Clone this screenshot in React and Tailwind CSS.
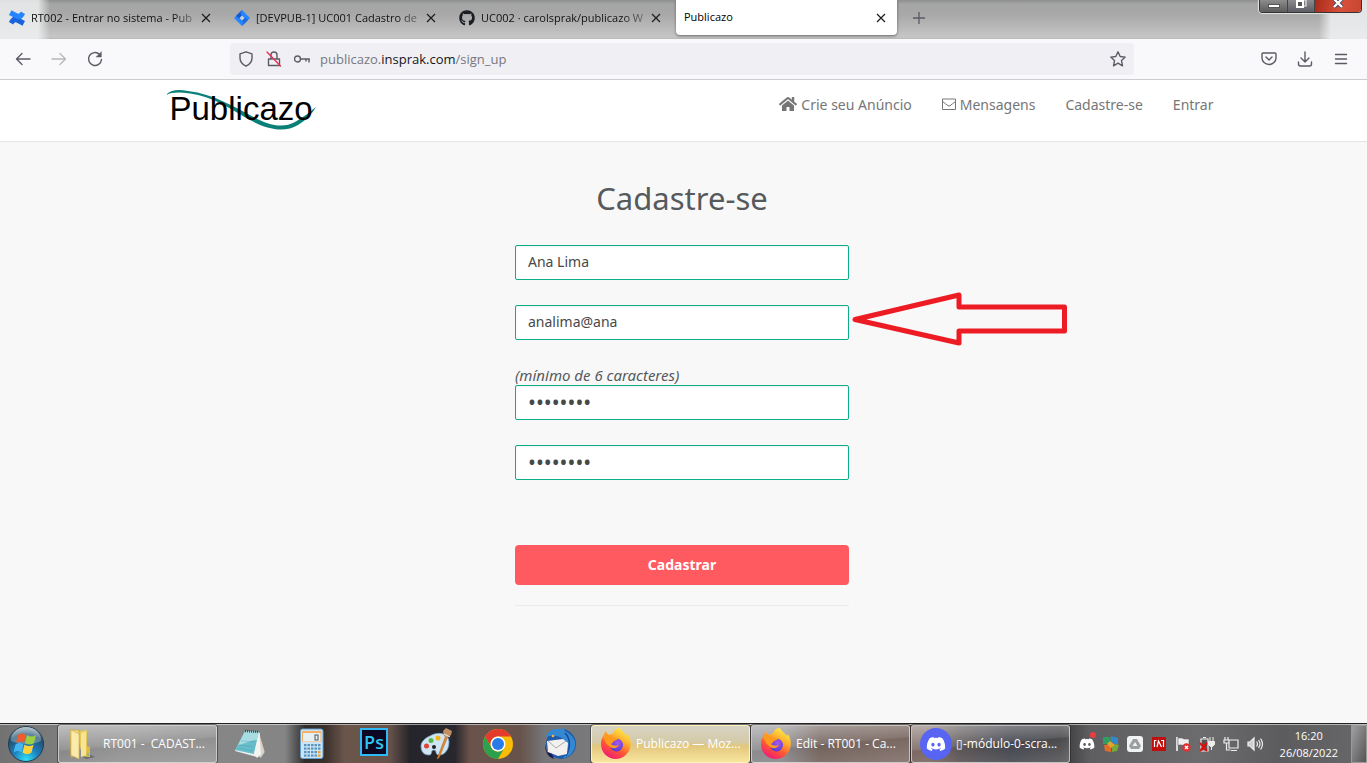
import { FaGithub, FaDiscord, FaHome } from "react-icons/fa";

const UI_FONT = "font-['Open_Sans','Noto_Sans',sans-serif]";

function ConfluenceIcon() {
  return (
    <svg viewBox="0 0 32 32" className="size-4 shrink-0" aria-hidden="true">
      <path d="M0 24c1-2 5-9 9-10.500c5-1.500 10 2 23 8.500l-5 9.500c-8-4-12-7-14-7c-2 0-3 2-4.500 4.500z" fill="#1a63dc" />
      <path d="M32 8c-1 2-5 9-9 10.500c-5 1.500-10-2-23-8.500l5-9.500c8 4 12 7 14 7c2 0 3-2 4.500-4.500z" fill="#2684ff" />
    </svg>
  );
}

function JiraIcon() {
  return (
    <svg viewBox="0 0 32 32" className="size-4 shrink-0" aria-hidden="true">
      <path d="M16 0l16 16l-16 16l-16-16z" fill="#2684ff" />
      <path d="M16 0c-4 5-3 9 0 11l-6 6l-6-5z" fill="#1458cc" />
      <path d="M16 32c4-5 3-9 0-11l6-6l6 5z" fill="#1d69e0" />
      <path d="M16 11l5 5l-5 5l-5-5z" fill="#c9d2e0" />
    </svg>
  );
}

function CloseGlyph() {
  return (
    <svg viewBox="0 0 16 16" className="size-4" fill="none" stroke="#1c1c22" strokeWidth="1.200" aria-hidden="true">
      <path d="M4 4l8 8M12 4l-8 8" />
    </svg>
  );
}

function Tab({ icon, title }) {
  return (
    <div className="flex h-9 w-[225px] min-w-0 items-center pr-[11px] pl-[9px]">
      {icon}
      <span className="ml-1.5 min-w-0 flex-1 text-[11px] whitespace-nowrap text-[#111] [mask-image:linear-gradient(to_right,#000_84%,#0004)]">
        {title}
      </span>
      <button type="button" aria-label="Fechar aba"><CloseGlyph /></button>
    </div>
  );
}

function TabStrip() {
  return (
    <div className="flex h-[39px] items-start overflow-hidden bg-[linear-gradient(to_right,#f2f4f5cc_0px,#f2f4f5cc_38px,transparent_50px,transparent_calc(100%-48px),#f2f4f5cc_calc(100%-36px)),linear-gradient(#8e8f8f_0px,#a4a5a4_4px,#a7a8a7_14px,#b6b7b6_26px,#c6c6c6_37px,#b8b8b8_39px)]">
      <Tab icon={<ConfluenceIcon />} title="RT002 - Entrar no sistema - Pub" />
      <Tab icon={<JiraIcon />} title="[DEVPUB-1] UC001 Cadastro de" />
      <Tab icon={<FaGithub className="size-4 shrink-0 text-[#1b1f23]" />} title="UC002 · carolsprak/publicazo W" />
      <div className="mr-3.5 ml-px flex h-[35px] w-[221px] items-center justify-between rounded-b bg-white pr-2 pl-2 shadow-[0_1px_3px_#0007]">
        <span className="text-[11px] text-black">Publicazo</span>
        <button type="button" aria-label="Fechar aba"><CloseGlyph /></button>
      </div>
      <button type="button" aria-label="Nova aba" className="flex h-9 items-center">
        <svg viewBox="0 0 16 16" className="size-4" stroke="#5b5b66" strokeWidth="1.300" aria-hidden="true"><path d="M8 2v12M2 8h12" /></svg>
      </button>
      <div className="mr-[5px] ml-auto flex h-[13px] overflow-hidden rounded-b-sm border border-t-0 border-[#333] shadow-[0_0_1px_1px_#e6e6e6]">
        <button type="button" aria-label="Minimizar" className="flex w-7 justify-center border-r border-[#444] bg-linear-to-b from-[#8d8d8d] to-[#5c5c5e] pt-1">
          <span className="h-1 w-3 border border-[#555] bg-white" />
        </button>
        <button type="button" aria-label="Restaurar" className="flex w-[27px] justify-center border-r border-[#444] bg-linear-to-b from-[#8d8d8d] to-[#5c5c66]">
          <svg viewBox="0 0 12 12" className="size-3" aria-hidden="true">
            <path d="M4 0h7v6h-2" fill="none" stroke="#e8e8e8" strokeWidth="1.200" />
            <path d="M2 1h6v6h-6z" fill="#555" stroke="#fff" strokeWidth="2" />
          </svg>
        </button>
        <button type="button" aria-label="Fechar janela" className="flex w-[46px] justify-center bg-[linear-gradient(100deg,#a82a1a,#d9503a_55%,#c84630)]">
          <svg viewBox="0 0 12 10" className="h-2.5 w-3" aria-hidden="true">
            <path d="M2 -1l8 8M10 -1l-8 8" stroke="#44445a" strokeWidth="4" />
            <path d="M2 -1l8 8M10 -1l-8 8" stroke="#fff" strokeWidth="2.400" />
          </svg>
        </button>
      </div>
    </div>
  );
}

const stroke = { fill: "none", stroke: "#5b5b66", strokeWidth: 1.4, strokeLinecap: "round", strokeLinejoin: "round" };

function Line({ children, ...rest }) {
  return <svg viewBox="0 0 16 16" className="size-4" {...stroke} {...rest} aria-hidden="true">{children}</svg>;
}

function Toolbar() {
  return (
    <div className="flex h-[41px] items-center border-b border-[#ccccd1] bg-[#f9f9fb] pr-[18px] pl-[15px]">
      <div className="flex flex-1 gap-5">
        <button type="button" aria-label="Voltar"><Line><path d="M15 8h-13.500M7 2.500l-5.500 5.500l5.500 5.500" /></Line></button>
        <button type="button" aria-label="Avançar"><Line stroke="#b8b8bd"><path d="M1 8h13.500M9 2.500l5.500 5.500l-5.500 5.500" /></Line></button>
        <button type="button" aria-label="Recarregar"><Line><path d="M14.500 8.500a6.500 6.500 0 1 1-2-5.200" /><path d="M14.300 1v5h-5z" fill="#5b5b66" strokeWidth="0.500" /></Line></button>
      </div>
      <div className="flex h-8 w-[904px] items-center rounded bg-[#f0f0f4] px-2">
        <Line><path d="M8 .8l6 2v4.200c0 4-2.500 6.500-6 8.200c-3.500-1.700-6-4.200-6-8.200v-4.200z" /></Line>
        <span className="ml-3">
          <Line><path d="M2.500 8h11v6.500h-11zM5 8v-4a3 3 0 0 1 6 0v4" /><path d="M1 1l13.500 14" stroke="#ef2f55" /></Line>
        </span>
        <span className="ml-3">
          <Line><circle cx="3.500" cy="8" r="3" /><path d="M6.500 8h9M15 8v3M12 8v2" /></Line>
        </span>
        <div className="ml-2.5 flex-1 pt-0.5 text-[13px] text-[#77777f]">publicazo.<span className="text-[#15141a]">insprak.com</span>/sign_up</div>
        <button type="button" aria-label="Adicionar aos favoritos"><Line><path d="M8 .8l2.200 4.700l5 .6l-3.700 3.500l1 5.200l-4.500-2.600l-4.500 2.600l1-5.200l-3.700-3.500l5-.6z" /></Line></button>
      </div>
      <div className="flex flex-1 justify-end gap-5">
        <button type="button" aria-label="Pocket"><Line><path d="M2 2h12a1 1 0 0 1 1 1v4a7 6.500 0 0 1-14 0v-4a1 1 0 0 1 1-1zM5 6l3 3l3-3" /></Line></button>
        <button type="button" aria-label="Downloads"><Line><path d="M8 1v10M4 7l4 4l4-4M1.500 11v2a2 2 0 0 0 2 2h9a2 2 0 0 0 2-2v-2" /></Line></button>
        <button type="button" aria-label="Menu"><Line><path d="M2.500 3.500h11M2.500 8h11M2.500 12.500h11" /></Line></button>
      </div>
    </div>
  );
}

function Logo() {
  return (
    <a href="#inicio" className="relative block h-[50px] w-[150px]">
      <svg viewBox="0 0 150 50" className="absolute inset-0 h-full w-full" fill="#0b8079" aria-hidden="true">
        <path d="M0 11C4 6 12 5 22 7C48 10 68 23 84 31C98 39 115 46 129 38C138 33 145 27 150 23C146 30 139 37 132 41C117 50 98 44 82 35C65 25 46 12 24 9.500C14 8 6 8 0 11z" />
      </svg>
      <span className="relative block pl-1 text-[33px] leading-[50px] text-black font-['Liberation_Sans',sans-serif]">Publicazo</span>
    </a>
  );
}

function SiteHeader() {
  return (
    <header className="border-b border-[#e4e4e4] bg-white">
      <div className="mx-auto flex h-[61px] max-w-[1064px] justify-between pt-1 pr-0.5 pl-3.5">
        <Logo />
        <nav className="flex h-10 items-center gap-[30px] text-[14px] text-[#767676]">
          <a href="#anuncio" className="flex items-center gap-1"><FaHome className="size-[18px]" />Crie seu Anúncio</a>
          <a href="#mensagens" className="flex items-center gap-1">
            <svg viewBox="0 0 14 14" className="size-3.5" fill="none" stroke="#767676" strokeLinejoin="round" aria-hidden="true">
              <path d="M.5 2h13v10.500h-13zM.5 4.500c2 1.500 4 3 5.500 4.200q1 .8 2 0c1.500-1.200 3.500-2.700 5.500-4.200" />
            </svg>
            Mensagens
          </a>
          <a href="#cadastro">Cadastre-se</a>
          <a href="#entrar">Entrar</a>
        </nav>
      </div>
    </header>
  );
}

const FIELD = "block h-[35px] w-full rounded-[2px] border border-[#0cae8a] bg-white px-3 pb-0.5 text-[#484848] shadow-[inset_0_1px_2px_#0001] outline-none";

function SignUp() {
  return (
    <main id="cadastro" className="flex flex-1 flex-col items-center bg-[#f8f8f8] pt-9 pr-[3px] text-[#565a5c]">
      <h1 className="text-[31px] leading-10">Cadastre-se</h1>
      <form className="mt-[27px] w-[334px] text-[14px]" onSubmit={(e) => e.preventDefault()}>
        <input aria-label="Nome" defaultValue="Ana Lima" className={FIELD} />
        <div className="relative mt-[25px]">
          <input aria-label="E-mail" defaultValue="analima@ana" className={FIELD} />
          <svg viewBox="0 0 218 56" className="absolute top-[-14px] left-[336px] h-14 w-[218px]" fill="none" stroke="#ed1c24" strokeWidth="5" strokeLinejoin="round" aria-hidden="true">
            <path d="M4 28.500L108 4v12h105.500v24H108v12z" />
          </svg>
        </div>
        <label htmlFor="senha" className="mt-[25px] block text-[15px] leading-5 italic">(mínimo de 6 caracteres)</label>
        <input id="senha" type="password" defaultValue="abcdefgh" className={`text-[21px] ${FIELD}`} />
        <input aria-label="Confirmar senha" type="password" defaultValue="abcdefgh" className={`mt-[25px] text-[21px] ${FIELD}`} />
        <button type="submit" className="mt-[65px] h-10 w-full rounded bg-[#ff5a5f] pb-0.5 font-bold text-white">Cadastrar</button>
        <hr className="mt-5 border-[#ececec]" />
      </form>
    </main>
  );
}

function FirefoxIcon() {
  return (
    <svg viewBox="0 0 32 32" className="size-8 shrink-0" aria-hidden="true">
      <defs>
        <linearGradient id="ffa" x1="0.800" y1="0" x2="0.250" y2="1">
          <stop offset="0" stopColor="#fff44f" /><stop offset="0.350" stopColor="#ffb02e" /><stop offset="0.650" stopColor="#ff5634" /><stop offset="1" stopColor="#f0147c" />
        </linearGradient>
        <radialGradient id="ffb" cx="0.600" cy="0.350" r="0.700"><stop offset="0" stopColor="#a857f2" /><stop offset="1" stopColor="#4a3ccf" /></radialGradient>
      </defs>
      <path d="M20 0c1 3 5 5 7 8l1-2c3 5 4 11 1 17c-3 5-8 8-13 8c-9 0-15-7-15-15c0-4 1-6 3-9l1-4l4 4l4-2c2-4 4-5 7-5z" fill="url(#ffa)" />
      <circle cx="16.500" cy="17" r="6.500" fill="url(#ffb)" />
      <path d="M3 8c4-2 7-1 10 1l5 1c0 2-2 2-4 3c-1 1-1 2-3 3c2 2 5 2 8 1c-2 4-7 4-10 1c-3-2-5-6-6-10z" fill="#ff9a20" />
    </svg>
  );
}

function StartOrb() {
  return (
    <svg viewBox="0 0 38 38" className="size-[38px]" aria-hidden="true">
      <defs><radialGradient id="orb" cx="0.500" cy="0.950" r="0.950"><stop offset="0" stopColor="#2fe0f8" /><stop offset="0.400" stopColor="#1d7dbd" /><stop offset="0.750" stopColor="#24506f" /><stop offset="1" stopColor="#a6bcc6" /></radialGradient></defs>
      <circle cx="19" cy="19" r="17.500" fill="url(#orb)" stroke="#243c4c" />
      <path d="M4 16a15 14 0 0 1 30 0c-8 4-20 4-30 0z" fill="#fff" opacity="0.280" />
      <path d="M11 10c3-2 5-2 8 0l-2 8c-3-2-5-2-8 0z" fill="#ef5b2b" />
      <path d="M20 10c3 2 6 2 9 0l-2 8c-3 2-6 2-9 0z" fill="#9bd042" />
      <path d="M8.500 19.500c3-2 5-2 8 0l-2 8c-3-2-5-2-8 0z" fill="#43b5ef" />
      <path d="M17.500 19.500c3 2 6 2 9 0l-2 8c-3 2-6 2-9 0z" fill="#fcd13b" />
    </svg>
  );
}

function FolderIcon() {
  return (
    <svg viewBox="0 0 32 32" className="size-8 shrink-0" aria-hidden="true">
      <path d="M16 29l8-2l4 2l-9 2z" fill="#0004" />
      <path d="M10 3l10-1v22l3 1v4l-8-1z" fill="#e5c85a" />
      <path d="M3 2h9v26l-8 1z" fill="#f0d983" stroke="#c9a53d" strokeWidth="0.700" />
      <path d="M4 2l8 4v25l-8-4z" fill="#fbebaa" stroke="#cfae4b" strokeWidth="0.600" />
      <path d="M14 5l5-2v24l-5 2z" fill="#f8e496" />
      <path d="M20 18l3 1v9l-4 1z" fill="#e0b943" /><path d="M21 25v3" stroke="#45b0e0" />
    </svg>
  );
}

function NotepadIcon() {
  return (
    <svg viewBox="0 0 32 32" className="size-8" aria-hidden="true">
      <path d="M25 4l6 20l-4 6l-5-3z" fill="#d8d5c8" stroke="#807f78" strokeWidth="0.500" />
      <path d="M11 4l15 1l-3 24l-22-6z" fill="#e8eff0" />
      <path d="M11 3l14 1l-5 22l-19-4z" fill="#68bdca" />
      <path d="M11 3l14 1l-2 8c-6 0-11 4-19 5z" fill="#a7dce2" />
      <path d="M20 26l5-22l2 22l-4 4z" fill="#f4f4f1" />
      <path d="M11 3l14 1" stroke="#454d50" strokeWidth="2.500" strokeDasharray="1 1" />
      <path d="M7 13l14 1M5 17l15 2M4 20l15 3" stroke="#4497a9" strokeWidth="0.600" opacity="0.600" />
    </svg>
  );
}

const CALC_KEYS = [4, 7.5, 11, 14.5, 18].flatMap((x) => [16, 19.5, 23, 26.5].map((y) => [x, y]));

function CalculatorIcon() {
  return (
    <svg viewBox="0 0 24 32" className="h-8 w-6" aria-hidden="true">
      <rect x="0.500" y="1" width="22.500" height="29.500" rx="2" fill="#c9e4f7" stroke="#669dc6" />
      <rect x="2" y="3" width="19.500" height="11" rx="1" fill="#f5b066" />
      <rect x="3" y="5" width="17.500" height="8.500" fill="#e8eff2" />
      <rect x="15" y="7" width="3" height="5" fill="none" stroke="#4b5963" />
      {CALC_KEYS.map(([x, y]) => <rect key={`${x}-${y}`} x={x} y={y} width="2.500" height="2.200" fill={x === 18 && y > 22 ? "#f3a02d" : "#5d94bd"} />)}
    </svg>
  );
}

function PhotoshopIcon() {
  return <span className="flex size-7 items-center justify-center border-2 border-[#2fb9f5] bg-[#0c0824] text-[18px] leading-none font-semibold text-[#31c5f0]">Ps</span>;
}

function PaintIcon() {
  return (
    <svg viewBox="0 0 32 32" className="size-8" aria-hidden="true">
      <path d="M10 8c8-5 19-3 19 6c0 8-5 14-11 13c-3-1-1-5-4-5c-4 0-1 5-5 5c-5 0-8-3-8-9c0-4 4-8 9-10z" fill="#cfe5f4" stroke="#75a5c6" strokeWidth="0.800" />
      <circle cx="6.500" cy="18" r="2.500" fill="#e34335" /><circle cx="11" cy="12.500" r="2.500" fill="#54b748" /><circle cx="18" cy="10" r="2.500" fill="#f2b31c" /><circle cx="14" cy="19" r="2" fill="#222" />
      <path d="M26 7l2 1l-9 22l-2 1z" fill="#e58b2d" stroke="#a45d17" strokeWidth="0.500" />
      <path d="M23 3l3-3l6 3l-1 4l-4 3l-3-2z" fill="#c09062" /><path d="M24 6l6 3" stroke="#eee" />
    </svg>
  );
}

function ChromeIcon() {
  return (
    <svg viewBox="0 0 32 32" className="size-8" aria-hidden="true">
      <circle cx="16" cy="16" r="15" fill="#fbbc05" />
      <path d="M3 8.500A15 15 0 0 1 29 8.500H16a7.500 7.500 0 0 0-6.500 11.200z" fill="#e33b2e" />
      <path d="M3 8.500a15 15 0 0 0 13 22.500l6.500-11.300a7.500 7.500 0 0 1-13 0z" fill="#2da04d" />
      <circle cx="16" cy="16" r="7.500" fill="#fff" /><circle cx="16" cy="16" r="6" fill="#287ce8" />
    </svg>
  );
}

function ThunderbirdIcon() {
  return (
    <svg viewBox="0 0 32 32" className="size-8" aria-hidden="true">
      <circle cx="17" cy="16" r="15" fill="#1e5baa" />
      <path d="M2 9c1-6 8-9 15-8l4-1c-2 2 0 3 2 4c6 4 9 9 8 14c-1 7-7 12-12 12c5-5 7-13 0-19c-4-4-12-4-17-2z" fill="#3589d3" />
      <path d="M21 5c6 6 5 15 1 23" stroke="#174b92" strokeWidth="1.500" fill="none" />
      <path d="M3 13l16-2l5 4l-1 11l-9 2l-10-4z" fill="#f3f1ef" />
      <path d="M4 13l8 7l10-7" fill="none" stroke="#a9a9ac" />
      <path d="M1 16c0 8 3 13 9 15l-2-5l-5-2z" fill="#201850" />
      <circle cx="9" cy="8" r="1.300" fill="#f8b62d" />
    </svg>
  );
}

function DiscordIcon() {
  return <span className="flex size-8 shrink-0 items-center justify-center rounded-full bg-[#5865f2]"><FaDiscord className="size-5 text-white" /></span>;
}

const PINNED = [
  ["Bloco de notas", NotepadIcon], ["Calculadora", CalculatorIcon], ["Photoshop", PhotoshopIcon],
  ["Paint", PaintIcon], ["Chrome", ChromeIcon], ["Thunderbird", ThunderbirdIcon],
];

function TaskButton({ icon, label, tone }) {
  return (
    <button type="button" className={`flex h-[38px] w-[159px] items-center gap-1 rounded-[3px] border px-2 text-[12px] text-white ${tone}`}>
      {icon}
      <span className="whitespace-pre">{label}</span>
    </button>
  );
}

const GLASS = "border-[#ddddddbb] bg-[linear-gradient(175deg,#ffffff80_0%,#ffffff30_48%,#ffffff18_52%,#ffffff38_100%)] shadow-[0_0_0_1px_#2228]";
const ACTIVE = "border-[#fff2bc] bg-[linear-gradient(#d7d3c5_0%,#d5cba8_45%,#e2c77c_55%,#f8e59e_100%)] shadow-[0_0_0_1px_#3339]";

function TrayIcons() {
  return (
    <div className="flex items-center gap-2">
      <span className="relative">
        <FaDiscord className="size-4 text-white" />
        <span className="absolute -top-1 -right-px size-1.5 rounded-full bg-[#f03b3e]" />
      </span>
      <svg viewBox="0 0 16 16" className="size-4" aria-hidden="true"><path d="M0 1h7l1 5l-3 2h-5z" fill="#2f9e62" /><path d="M8 0l7 2v6h-4l-3-3z" fill="#3188cf" /><path d="M1 9h5l2 2v5l-6-1z" fill="#e26c2e" /><path d="M9 10l4-2l3 1l-2 6l-5 1z" fill="#76a83a" /><path d="M4 8l3-3l5 4l-4 3z" fill="#e0a52c" /></svg>
      <svg viewBox="0 0 16 16" className="size-4" aria-hidden="true"><rect width="16" height="16" rx="3" fill="#f2f2f2" /><path d="M6 3h4l4 7l-2 3h-8l-2-3z" fill="#9aa0a5" /><path d="M8 6l2.500 4h-5z" fill="#f2f2f2" /></svg>
      <svg viewBox="0 0 16 16" className="size-4" aria-hidden="true"><path d="M1 1h14v14h-14z" fill="#c20d0d" /><path d="M3.500 4v7M3.500 4.500h2M6 11l1.500-6l3 6M12.500 4v7M12.500 4.500h-2.500" fill="none" stroke="#fff" strokeWidth="1.200" /></svg>
      <svg viewBox="0 0 16 16" className="size-4" aria-hidden="true"><path d="M2 1v14" stroke="#fff" strokeWidth="1.500" /><path d="M3 2h4l2 1h5v7h-5l-2-1h-4z" fill="#eee" stroke="#555" strokeWidth="0.500" /><circle cx="11.500" cy="11.500" r="4.200" fill="#df3032" /><path d="M10 10l3 3M13 10l-3 3" stroke="#fff" strokeWidth="1.400" /></svg>
      <svg viewBox="0 0 16 16" className="size-4" aria-hidden="true"><path d="M2 3h7v12h-7zM4 1.500h3" fill="#555" stroke="#eee" strokeWidth="1.200" /><path d="M11 1v4M14 1v4M9.500 5.500h6v3l-2 2h-2l-2-2zM12.500 10v4" fill="#eee" stroke="#eee" /><path d="M1 7l7 8M8 7l-7 8" stroke="#e30c0c" strokeWidth="2" /></svg>
      <svg viewBox="0 0 16 16" className="size-4" fill="none" stroke="#eee" strokeWidth="1.200" aria-hidden="true"><path d="M6 4h9v8h-9zM8 14.500h6M2 1v3M5 1v3M1 4h5v3h-5zM3.500 7v7h4" /></svg>
      <svg viewBox="0 0 16 16" className="size-4" fill="none" stroke="#eee" strokeWidth="1.200" aria-hidden="true"><path d="M1 6h2l4-4v12l-4-4h-2z" fill="#ccc" /><path d="M9.500 5.500q2 2.500 0 5M11.500 4q3 4 0 8M13.500 2.500q4 5.500 0 11" /></svg>
    </div>
  );
}

function Taskbar() {
  return (
    <footer className={`flex h-10 items-center border-t border-[#222] bg-[linear-gradient(to_right,#727272_0px,#888_120px,#858585_285px,#302d2d_305px,#3a302c_325px,#6b564b_345px,#66524a_390px,#25242a_410px,#28272d_455px,#6a534b_470px,#67534b_520px,#77777a_545px,#808083_780px,#65534c_820px,#705b54_930px,#4a4344_960px,#30323b_1010px,#39393c_1060px,#5e5e60_1090px,#6c6c6f_1200px,#5c5c5e_1280px,#68686a_100%)] shadow-[inset_0_1px_0_#fff8] ${UI_FONT}`}>
      <button type="button" aria-label="Iniciar" className="flex w-[58px] pl-[7px]"><StartOrb /></button>
      <TaskButton icon={<FolderIcon />} label="RT001 -  CADAST..." tone={GLASS} />
      <div className="flex pl-0.5">
        {PINNED.map(([name, Icon]) => (
          <button key={name} type="button" aria-label={name} className="flex w-[62px] justify-center"><Icon /></button>
        ))}
      </div>
      <div className="flex gap-px">
        <TaskButton icon={<FirefoxIcon />} label="Publicazo — Moz..." tone={ACTIVE} />
        <TaskButton icon={<FirefoxIcon />} label="Edit - RT001 - Ca..." tone={GLASS} />
        <TaskButton icon={<DiscordIcon />} label="▯-módulo-0-scra..." tone={GLASS} />
      </div>
      <div className="ml-auto flex h-full items-center gap-[17px]">
        <TrayIcons />
        <div className="text-center text-[11px] leading-[17px] text-white">16:20<br />26/08/2022</div>
        <button type="button" aria-label="Mostrar área de trabalho" className="-ml-1 h-[38px] w-4 border border-[#9a9a9a] bg-linear-to-br from-[#a0a0a0] to-[#565656]" />
      </div>
    </footer>
  );
}

export default function App() {
  return (
    <div className="flex min-h-screen flex-col overflow-x-hidden font-['Noto_Sans',sans-serif]">
      <div className={UI_FONT}>
        <TabStrip />
        <Toolbar />
      </div>
      <SiteHeader />
      <SignUp />
      <Taskbar />
    </div>
  );
}
